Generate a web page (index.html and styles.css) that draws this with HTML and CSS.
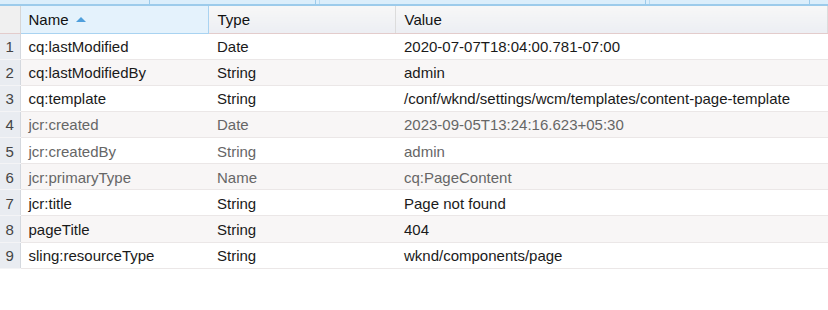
FILE: index.html
```html
<!DOCTYPE html>
<html lang="en">
<head>
    <meta charset="UTF-8">
    <title>Properties</title>
    <link rel="stylesheet" href="styles.css">
</head>
<body>
    <div class="tab-strip">
        <span class="tab tab-a"></span>
        <span class="tab tab-b"></span>
        <span class="tab tab-c"></span>
        <span class="tab tab-d"></span>
        <span class="tab tab-e"></span>
        <span class="tab tab-f"></span>
        <span class="tab tab-g"></span>
    </div>

    <table class="props">
        <colgroup>
            <col class="col-num">
            <col class="col-name">
            <col class="col-type">
            <col>
        </colgroup>
        <thead>
            <tr>
                <th class="num"></th>
                <th class="sorted">Name <span class="sort-arrow"></span></th>
                <th>Type</th>
                <th>Value</th>
            </tr>
        </thead>
        <tbody>
            <tr><td class="num">1</td><td>cq:lastModified</td><td>Date</td><td>2020-07-07T18:04:00.781-07:00</td></tr>
            <tr><td class="num">2</td><td>cq:lastModifiedBy</td><td>String</td><td>admin</td></tr>
            <tr><td class="num">3</td><td>cq:template</td><td>String</td><td>/conf/wknd/settings/wcm/templates/content-page-template</td></tr>
            <tr class="protected"><td class="num">4</td><td>jcr:created</td><td>Date</td><td>2023-09-05T13:24:16.623+05:30</td></tr>
            <tr class="protected"><td class="num">5</td><td>jcr:createdBy</td><td>String</td><td>admin</td></tr>
            <tr class="protected"><td class="num">6</td><td>jcr:primaryType</td><td>Name</td><td>cq:PageContent</td></tr>
            <tr><td class="num">7</td><td>jcr:title</td><td>String</td><td>Page not found</td></tr>
            <tr><td class="num">8</td><td>pageTitle</td><td>String</td><td>404</td></tr>
            <tr><td class="num">9</td><td>sling:resourceType</td><td>String</td><td>wknd/components/page</td></tr>
        </tbody>
    </table>
</body>
</html>
```

FILE: styles.css
```css
* {
    margin: 0;
    padding: 0;
    box-sizing: border-box;
}

body {
    font-family: "Liberation Sans", Arial, sans-serif;
    font-size: 15px;
    color: #1a1a1a;
    background: #fff;
}

/* strip of the panel above the grid */
.tab-strip {
    display: flex;
    height: 6px;
    background: #dbeefb;
    border-bottom: 2px solid #9ccbeb;
}

.tab {
    height: 100%;
    border-right: 1px solid #9ccbeb;
}

.tab-a { width: 150px; }
.tab-b { width: 166px; }
.tab-c { width: 4px; border-right-color: #b8dcf3; }
.tab-d { width: 326px; }
.tab-e { width: 4px; border-right-color: #b8dcf3; }
.tab-f { width: 160px; }
.tab-g { flex: 1; border-right: none; }

.props {
    width: 100%;
    border-collapse: collapse;
    table-layout: fixed;
}

.col-num { width: 20px; }
.col-name { width: 188px; }
.col-type { width: 187px; }

.props th {
    height: 27px;
    font-weight: normal;
    text-align: left;
    padding: 1px 0 0 9px;
    color: #111;
    background: linear-gradient(#f7f7f7, #eceef3);
    border-right: 1px solid #dcdcdc;
    border-bottom: 1px solid #e3cccc;
}

.props th.num {
    background: #f0f0f0;
    border-right: 1px solid #d6d6d6;
}

.props th.sorted {
    padding-left: 8px;
    background: #e4f2fc;
    border: 1px solid #a9d3f1;
    border-top: none;
}

.sort-arrow {
    display: inline-block;
    width: 0;
    height: 0;
    margin-left: 3px;
    vertical-align: 3px;
    border-left: 5px solid transparent;
    border-right: 5px solid transparent;
    border-bottom: 5px solid #4f9fdc;
}

.props td {
    height: 26.15px;
    padding: 1px 0 0 9px;
    white-space: nowrap;
    overflow: hidden;
    border-bottom: 1px solid #ebe7e7;
}

.props td:nth-child(2) {
    padding-left: 8px;
}

.props tbody tr:nth-child(even) td {
    background: #f8f6f6;
}

.props td.num,
.props tbody tr:nth-child(even) td.num {
    padding: 1px 0 0;
    text-align: center;
    color: #444;
    background: #e9ecf1;
    border-right: 1px solid #d4d8de;
    border-bottom: 1px solid #f4f4f6;
}

.props tr.protected td {
    color: #666;
}

.props tr.protected td.num {
    color: #444;
}
```
